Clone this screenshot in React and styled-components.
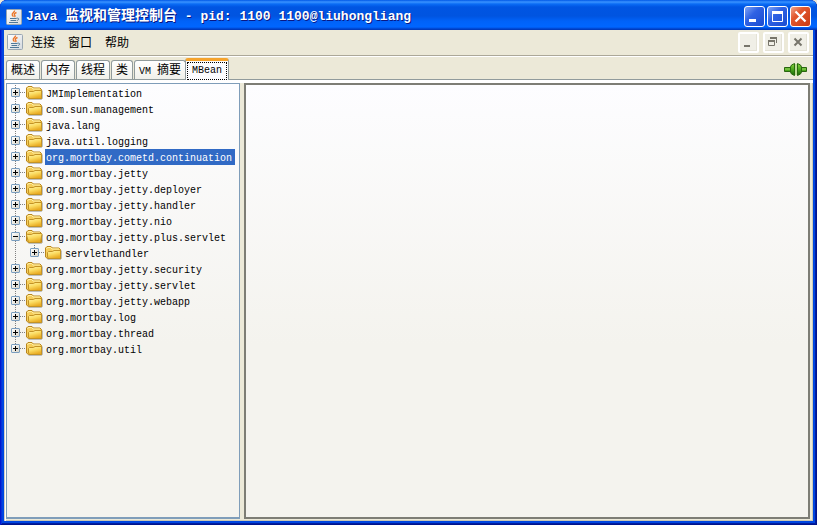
import React, { useState } from 'react';
import styled, { createGlobalStyle, css } from 'styled-components';

const GlobalStyle = createGlobalStyle`
  * {
    box-sizing: border-box;
  }

  body {
    margin: 0;
    background: #ece9d8;
  }

  button {
    margin: 0;
    padding: 0;
    color: inherit;
    font: inherit;
  }
`;

const Window = styled.div`
  display: flex;
  flex-direction: column;
  min-height: 100vh;
  padding: 0 4px 4px;
  border-radius: 7px 7px 0 0;

  background: #0046e0;
  box-shadow: inset 1px 0 #0019cf, inset -1px 0 #00138c, inset 0 -1px #00138c,
    inset 2px 0 #0831d9, inset -2px -2px #001ea0;
  color: #000;
  font-family: 'Liberation Mono', 'Noto Sans CJK SC', monospace;
  font-size: 12px;
`;

const TitleBar = styled.header`
  display: flex;
  align-items: center;
  gap: 4px;
  height: 30px;
  margin: 0 -4px;
  padding: 3px 6px 0;
  border-radius: 7px 7px 0 0;

  background: linear-gradient(
    #0058e6 0,
    #3a93ff 2px,
    #0a6cf5 4px,
    #0055e2 7px,
    #0054e0 16px,
    #0062f8 21px,
    #0066ff 27px,
    #0040c8 29px,
    #0036b4 30px
  );
`;

const Title = styled.h1`
  flex: 1;
  margin: 0;

  color: #fff;
  font-size: 13px;
  font-weight: 700;
  line-height: 20px;
  text-shadow: 1px 1px #0a1883;
  white-space: nowrap;
`;

const AppName = styled.span`
  font-size: 14px;
`;

const Buttons = styled.div`
  display: flex;
  gap: ${({ $gap }) => $gap}px;
`;

const WindowButton = styled.button`
  display: flex;
  width: 21px;
  height: 21px;
  border: 1px solid #fff;
  border-radius: 3px;

  background: ${({ $close }) =>
    $close
      ? 'linear-gradient(135deg, #f0a58c, #e2582f 35%, #c93a12)'
      : 'linear-gradient(135deg, #7fa4f5, #2f62e4 40%, #1a4bd0)'};
`;

const ChildButton = styled(WindowButton)`
  border: 2px solid #fff;
  border-radius: 2px;
  background: #f0efe7;
  box-shadow: inset -1px -1px #e4e2d6;

  svg {
    flex: none;
    margin: -1px;
  }
`;

const MenuBar = styled.nav`
  display: flex;
  align-items: center;
  height: 27px;
  padding: 0 4px 2px 3px;
  border-bottom: 1px solid #fff;

  background: #ece9d8;
  box-shadow: inset 0 -1px #aca899;
`;

const Menus = styled.div`
  display: flex;
  flex: 1;
  gap: 13px;
  padding: 3px 0 0 8px;
`;

const MenuItem = styled.button`
  border: 0;
  background: none;
  line-height: 16px;
`;

const TabBar = styled.div`
  display: flex;
  align-items: flex-end;
  height: 22px;
  padding: 0 5px 0 2px;
  background: #ece9d8;
`;

const Tabs = styled.div`
  display: flex;
  flex: 1;
  align-items: flex-end;
  gap: 1px;
`;

const Tab = styled.button`
  height: 19px;
  padding: 0 4px;
  border: 1px solid #919b9c;
  border-bottom: 0;
  border-radius: 3px 3px 0 0;

  background: linear-gradient(#fff, #f0f0ea);
  line-height: 20px;
  white-space: nowrap;

  ${({ $selected }) =>
    $selected &&
    css`
      z-index: 1;
      height: 22px;
      margin: 0 0 -1px -2px;
      padding: 0 1px;
      border-top: 3px solid #f5a32c;
      background: #fcfcfe;

      > span {
        display: block;
        height: 18px;
        padding: 0 4px;
        border: 1px dotted #000;
        line-height: 15px;
      }
    `}
`;

const Latin = styled.span`
  font-size: 10px;
`;

const Connection = styled.div`
  display: flex;
  height: 18px;
`;

const Frame = styled.main`
  display: flex;
  flex: 1;
  gap: 4px;
  padding: 3px 3px 2px 1px;
  border-top: 1px solid #919b9c;
  border-left: 1px solid #d4d0c0;

  background: #ece9d8;
  box-shadow: inset 1px 3px #fff, inset -1px -1px #c9c7b4;
`;

const TreePane = styled.section`
  flex: 0 0 234px;
  padding: 1px 4px;
  border: 1px solid #7f9db9;
  border-bottom-width: 2px;
  background: linear-gradient(#fdfdff, #f4f3ee 60%);
`;

const DetailPane = styled.section`
  flex: 1;
  border: 2px solid #7d7d75;
  background: linear-gradient(#fdfdff, #f4f3ee 60%);
`;

const TreeList = styled.ul`
  margin: 0;
  padding: 0;
  list-style: none;

  & & {
    padding-left: 19px;
    background: repeating-linear-gradient(#808080 0 1px, transparent 1px 2px)
      4px 0 / 1px 100% no-repeat;
  }
`;

const TreeRow = styled.div`
  display: flex;
  height: 16px;

  background: repeating-linear-gradient(#808080 0 1px, transparent 1px 2px) 4px
      0 / 1px ${({ $last }) => ($last ? '50%' : '100%')} no-repeat,
    repeating-linear-gradient(90deg, #808080 0 1px, transparent 1px 2px) 9px
      7px / 6px 1px no-repeat;
`;

const Toggle = styled.button`
  display: flex;
  width: 9px;
  height: 9px;
  margin: 3px 6px 0 0;
  border: 1px solid #7a9ebf;
  border-radius: 1px;
  background: linear-gradient(135deg, #fff, #d9d5c8);
`;

const NodeLabel = styled.button`
  height: 16px;
  margin-left: 2px;
  padding: 0 3px 0 1px;
  border: 0;

  background: ${({ $selected }) => ($selected ? '#316ac5' : 'none')};
  color: ${({ $selected }) => ($selected ? '#fff' : '#000')};
  font-size: 10px;
  line-height: 16px;
  white-space: nowrap;

  span {
    display: block;
    padding-top: 2px;
  }
`;

const nodes = [
  { name: 'JMImplementation' },
  { name: 'com.sun.management' },
  { name: 'java.lang' },
  { name: 'java.util.logging' },
  { name: 'org.mortbay.cometd.continuation' },
  { name: 'org.mortbay.jetty' },
  { name: 'org.mortbay.jetty.deployer' },
  { name: 'org.mortbay.jetty.handler' },
  { name: 'org.mortbay.jetty.nio' },
  {
    name: 'org.mortbay.jetty.plus.servlet',
    children: [{ name: 'servlethandler' }],
  },
  { name: 'org.mortbay.jetty.security' },
  { name: 'org.mortbay.jetty.servlet' },
  { name: 'org.mortbay.jetty.webapp' },
  { name: 'org.mortbay.log' },
  { name: 'org.mortbay.thread' },
  { name: 'org.mortbay.util' },
];

const tabs = ['概述', '内存', '线程', '类', 'VM 摘要', 'MBean'];

function JavaIcon() {
  return (
    <svg width="16" height="16" viewBox="0 0 16 16" aria-hidden="true">
      <defs>
        <linearGradient id="java-bg" x2="1" y2="1">
          <stop stopColor="#fff" />
          <stop offset="1" stopColor="#d5dade" />
        </linearGradient>
      </defs>
      <rect x=".5" y=".5" width="15" height="15" rx="1" fill="url(#java-bg)" stroke="#9aa7b2" />
      <path d="M8.500 1.500c.5 1.800-3 2.500-2.200 4.500.3.700.9 1 .9 1.800M10.500 3.500c-2.200.9-2.700 1.800-1.800 2.700.5.500.3 1.200-.3 1.700" fill="none" stroke="#ec7426" strokeWidth="1.400" />
      <path d="M4 9.500h6.500M4.500 11.500h5.500M3 13.500h9" fill="none" stroke="#4f7898" />
      <path d="M10.500 9.200c3-.5 2.800 1.900.3 2.300" fill="none" stroke="#4f7898" />
    </svg>
  );
}

function FolderIcon({ open }) {
  return (
    <svg width="17" height="16" viewBox="0 0 17 16" aria-hidden="true">
      <defs>
        <linearGradient id="folder-front" x2=".4" y2="1">
          <stop stopColor="#fff4a8" />
          <stop offset=".5" stopColor="#fbdc62" />
          <stop offset="1" stopColor="#e9ab22" />
        </linearGradient>
      </defs>
      <path d="M2.500 14.500h13l1-1v-8" fill="none" stroke="#9a9a94" opacity=".6" />
      <path d="M.5 12V3L2 1.500h4L7.500 3H14l1.500 1.500v9h-13z" fill="#f5cd5b" stroke="#b8851c" />
      <path d="M1.500 4l1-1.500h3L7 4h7" fill="none" stroke="#fff0a6" />
      {open ? (
        <path d="M2.500 13.500L.5 6l1-.5h4l1.500-1h8.500l.5 1-1.500 8z" fill="url(#folder-front)" stroke="#c39326" />
      ) : (
        <path d="M3.500 13.500L2.500 12V7.500L3.500 6.500h4L9 5.500h6.500v8z" fill="url(#folder-front)" stroke="#c39326" />
      )}
    </svg>
  );
}

function ConnectedIcon() {
  return (
    <svg width="24" height="16" viewBox="0 0 24 16" aria-hidden="true">
      <defs>
        <linearGradient id="plug" x2="0" y2="1">
          <stop stopColor="#8bd33f" />
          <stop offset=".5" stopColor="#48a51c" />
          <stop offset="1" stopColor="#196309" />
        </linearGradient>
      </defs>
      <path d="M.5 6.500h7v4h-7zM16.500 6.500h6v4h-6z" fill="#4aa51c" stroke="#2a650f" />
      <path d="M1 8h6M17 8h5" stroke="#9ddd63" />
      <path d="M10.500 2.500L7.500 4 6.500 6v5l1 2 3 1.500zM13.500 2.500l3 1.500 1 2v5l-1 2-3 1.500z" fill="url(#plug)" stroke="#286a0d" />
      <path d="M12 3v11" stroke="#86cc4b" />
    </svg>
  );
}

function ControlIcon({ kind, child }) {
  const color = child ? '#77756b' : '#fff';
  return (
    <svg width="19" height="19" viewBox="0 0 19 19" fill="none" stroke={color} aria-hidden="true">
      {kind === 'minimize' &&
        (child ? <path d="M5 13h6" strokeWidth="2" /> : <path d="M4 13.500h7" strokeWidth="3" />)}
      {kind === 'maximize' && (
        <>
          <path d="M4.500 5v9.500h10V5" />
          <path d="M4 5.500h11" strokeWidth="3" />
        </>
      )}
      {kind === 'restore' && (
        <>
          <path d="M6 5h7M4 8h7" strokeWidth="2" />
          <path d="M12.500 5v5M4.500 8v4.500h6V8" />
        </>
      )}
      {kind === 'close' &&
        (child ? (
          <path d="M5.500 5.500l7 7M12.500 5.500l-7 7" strokeWidth="2" />
        ) : (
          <path d="M4.500 4.500l10 10M14.500 4.500l-10 10" strokeWidth="2.300" />
        ))}
    </svg>
  );
}

function TreeNode({ node, last, selected, onSelect }) {
  const [open, setOpen] = useState(Boolean(node.children));

  return (
    <li>
      <TreeRow $last={last}>
        <Toggle
          aria-label={node.name}
          aria-expanded={open}
          onClick={() => setOpen(!open)}
        >
          <svg width="7" height="7" viewBox="0 0 7 7" stroke="#000" aria-hidden="true">
            <path d={open ? 'M1 3.5h5' : 'M1 3.5h5M3.5 1v5'} />
          </svg>
        </Toggle>
        <FolderIcon open={open} />
        <NodeLabel
          $selected={selected === node.name}
          onClick={() => onSelect(node.name)}
        >
          <span>{node.name}</span>
        </NodeLabel>
      </TreeRow>
      {open && node.children && (
        <TreeList>
          {node.children.map((child, i) => (
            <TreeNode
              key={child.name}
              node={child}
              last={i === node.children.length - 1}
              selected={selected}
              onSelect={onSelect}
            />
          ))}
        </TreeList>
      )}
    </li>
  );
}

export default function App() {
  const [tab, setTab] = useState('MBean');
  const [selected, setSelected] = useState('org.mortbay.cometd.continuation');

  return (
    <>
      <GlobalStyle />
      <Window>
        <TitleBar>
          <JavaIcon />
          <Title>
            Java <AppName>监视和管理控制台</AppName> - pid: 1100 1100@liuhongliang
          </Title>
          <Buttons $gap={2}>
            <WindowButton aria-label="最小化">
              <ControlIcon kind="minimize" />
            </WindowButton>
            <WindowButton aria-label="最大化">
              <ControlIcon kind="maximize" />
            </WindowButton>
            <WindowButton $close aria-label="关闭">
              <ControlIcon kind="close" />
            </WindowButton>
          </Buttons>
        </TitleBar>

        <MenuBar>
          <JavaIcon />
          <Menus>
            <MenuItem>连接</MenuItem>
            <MenuItem>窗口</MenuItem>
            <MenuItem>帮助</MenuItem>
          </Menus>
          <Buttons $gap={4}>
            <ChildButton aria-label="最小化">
              <ControlIcon kind="minimize" child />
            </ChildButton>
            <ChildButton aria-label="还原">
              <ControlIcon kind="restore" child />
            </ChildButton>
            <ChildButton aria-label="关闭">
              <ControlIcon kind="close" child />
            </ChildButton>
          </Buttons>
        </MenuBar>

        <TabBar>
          <Tabs role="tablist">
            {tabs.map((name) => (
              <Tab
                key={name}
                role="tab"
                aria-selected={tab === name}
                $selected={tab === name}
                onClick={() => setTab(name)}
              >
                <span>
                  {name.startsWith('VM') ? (
                    <>
                      <Latin>VM </Latin>摘要
                    </>
                  ) : name === 'MBean' ? (
                    <Latin>{name}</Latin>
                  ) : (
                    name
                  )}
                </span>
              </Tab>
            ))}
          </Tabs>
          <Connection>
            <ConnectedIcon />
          </Connection>
        </TabBar>

        <Frame>
          <TreePane>
            <TreeList>
              {nodes.map((node, i) => (
                <TreeNode
                  key={node.name}
                  node={node}
                  last={i === nodes.length - 1}
                  selected={selected}
                  onSelect={setSelected}
                />
              ))}
            </TreeList>
          </TreePane>
          <DetailPane />
        </Frame>
      </Window>
    </>
  );
}
